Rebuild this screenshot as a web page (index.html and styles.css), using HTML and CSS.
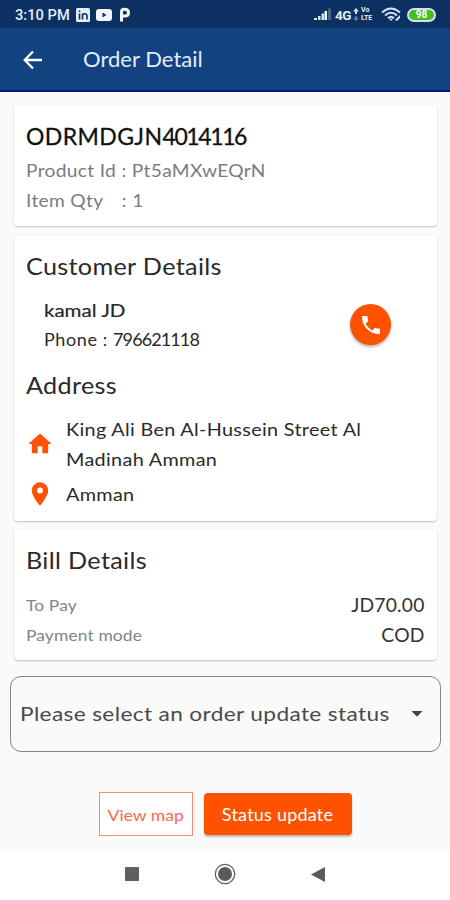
FILE: index.html
```
<!DOCTYPE html>
<html lang="en">
<head>
<meta charset="utf-8">
<title>Order Detail</title>
<link rel="stylesheet" href="styles.css">
</head>
<body>
<div class="status">
  <span class="time">3:10 PM</span>
  <svg class="apps" width="56" height="16" viewBox="0 0 56 16">
    <rect x="0" y="1" width="14" height="14" rx="1.5" fill="#e6edf8"/>
    <path d="M3.500 6.500v6M3.500 3.400v1.500M6.500 12.500V6.500M6.500 9q0-2.200 2.200-2.200T11 9v3.500" fill="none" stroke="#0c2e61" stroke-width="1.600"/>
    <rect x="20" y="2" width="16" height="12" rx="3" fill="#f2f5fb"/><path d="M26.500 5.500v5l4-2.500z" fill="#0c2e61"/>
    <path d="M45.500 14.500V5q0-2.700 3-2.700 4 0 4 3.400t-4 3.400h-1.500" fill="none" stroke="#f2f5fb" stroke-width="3"/>
  </svg>
  <span class="spacer"></span>
  <svg width="18" height="13" viewBox="0 0 18 13"><path d="M0 12h3v-2H0zM4 12h2.500V8H4zM7.500 12H10V5.500H7.500z" fill="#d5dfed"/><path d="M10.500 12H13V3h-2.500z" fill="#fff"/><path d="M14 12h3V.5h-3z" fill="#47648c"/></svg>
  <span class="net">4G</span>
  <svg class="arrows" width="6" height="14" viewBox="0 0 6 14"><path d="M0 3.500 3 0l3 3.500H4V6H2V3.500z" fill="#d5dfed"/><path d="M0 10l3 3 3-3H4V8H2v2z" fill="#617ba0"/></svg>
  <span class="volte"><span>Vo</span><span>LTE</span></span>
  <svg class="wifi" width="20" height="15" viewBox="0 0 20 15"><g fill="none" stroke="#d5dfed" stroke-width="2"><path d="M1 5.500q9-8 18 0M4 8.500q6-5.500 12 0M7 11.300q3-2.800 6 0"/></g><path d="m10 14-2-2.200h4zM14 13l5-5v3l-3 3z" fill="#d5dfed"/></svg>
  <span class="battery">98</span>
</div>
<header class="bar">
  <svg width="20" height="20" viewBox="0 0 20 20"><path d="M19 10H2M10 1.500 1.700 10l8.300 8.500" fill="none" stroke="#fff" stroke-width="2.300"/></svg>
  <h1>Order Detail</h1>
</header>
<main>
  <section class="card order">
    <h2 class="code">ODRMDGJN<span class="digits">4014116</span></h2>
    <p class="pid">Product Id : Pt5aMXwEQrN</p>
    <p class="qty"><span class="qlabel">Item Qty</span><span>: 1</span></p>
  </section>
  <section class="card customer">
    <h2 class="heading">Customer Details</h2>
    <div class="person">
      <div>
        <p class="name">kamal JD</p>
        <p class="phone">Phone : <span class="digits">796621118</span></p>
      </div>
      <span class="call"><svg width="24" height="24" viewBox="0 0 24 24"><path fill="#fff" d="M6.620 10.790c1.440 2.830 3.760 5.140 6.590 6.590l2.200-2.200c.27-.27.67-.36 1.020-.24 1.120.37 2.330.57 3.570.57.55 0 1 .45 1 1V20c0 .55-.45 1-1 1-9.390 0-17-7.610-17-17 0-.55.45-1 1-1h3.500c.55 0 1 .45 1 1 0 1.250.2 2.450.57 3.570.11.35.03.74-.25 1.020z"/></svg></span>
    </div>
    <h2 class="heading">Address</h2>
    <div class="place">
      <svg width="28" height="28" viewBox="0 0 24 24"><path d="M10 20v-6h4v6h5v-8h3L12 3 2 12h3v8z"/></svg>
      <p>King Ali Ben Al-Hussein Street Al<br>Madinah Amman</p>
    </div>
    <div class="place city">
      <svg width="28" height="28" viewBox="0 0 24 24"><path d="M12 2C8.130 2 5 5.130 5 9c0 5.250 7 13 7 13s7-7.750 7-13c0-3.870-3.130-7-7-7zm0 9.500a2.500 2.500 0 0 1 0-5 2.500 2.500 0 0 1 0 5z"/></svg>
      <p>Amman</p>
    </div>
  </section>
  <section class="card bill">
    <h2 class="heading">Bill Details</h2>
    <div class="row"><span class="label">To Pay</span><span class="value">JD70.00</span></div>
    <div class="row"><span class="label">Payment mode</span><span class="value">COD</span></div>
  </section>
  <div class="select"><span>Please select an order update status</span><svg width="12" height="6" viewBox="0 0 12 6"><path d="M.5 0h11L6 5.800z" fill="#444"/></svg></div>
  <div class="actions">
    <button class="map"><span>View map</span></button>
    <button class="update"><span>Status update</span></button>
  </div>
</main>
<nav>
  <svg width="14" height="14"><rect width="14" height="14" fill="#606060"/></svg>
  <svg width="22" height="22" viewBox="0 0 22 22"><circle cx="11" cy="11" r="9.700" fill="none" stroke="#606060" stroke-width="1.300"/><circle cx="11" cy="11" r="7" fill="#5b5b5b"/></svg>
  <svg width="14" height="15" viewBox="0 0 14 15"><path d="M14 0v15L0 7.500z" fill="#5b5b5b"/></svg>
</nav>
</body>
</html>
```
FILE: styles.css
```
* { box-sizing: border-box; margin: 0; padding: 0; }
body { width: 450px; height: 900px; display: flex; flex-direction: column; background: #fafafa; font-family: Lato, sans-serif; color: #2a2a2a; overflow: hidden; }
svg { display: block; flex: none; }
p, h1, h2, span { white-space: nowrap; font-weight: 400; }
.status { height: 28px; background: #0b3162; color: #e6edf8; display: flex; align-items: center; padding: 1px 14px 0 15px; font-family: Roboto, sans-serif; }
.time { font-size: 14.700px; font-weight: 500; }
.apps { margin-left: 6px; }
.spacer { flex: 1; }
.net { font-size: 13.500px; font-weight: 700; margin-left: 3px; letter-spacing: -.5px; }
.arrows { margin-left: 2px; }
.volte { display: flex; flex-direction: column; font-size: 7px; line-height: 8px; margin: 0 0 1px 2px; width: 14px; }
.volte span { font-weight: 700; }
.wifi { margin: 0 6px 0 6px; }
.battery { width: 29px; height: 14px; border-radius: 7px; background: #43bf23; border: 2px solid #d5dfed; color: #fff; font-size: 10px; font-weight: 700; line-height: 10px; text-align: center; }
.bar { height: 64px; background: #124280; border-bottom: 2px solid #06157a; display: flex; align-items: center; padding-left: 23px; }
.bar svg { margin-top: 2px; }
.bar h1 { margin-left: 40px; color: #e4ecfa; font-size: 21px; line-height: 30px; transform: scaleX(1.05); transform-origin: left; }
main { padding: 14px 9px 0 10px; height: 758px; display: flex; flex-direction: column; }
.card { background: #fff; border-radius: 4px; margin: 0 4px; padding: 0 12px; box-shadow: 0 1px 2px rgba(0,0,0,.23); flex: none; }
.order { height: 120px; padding-top: 15px; color: #7c7c7c; }
.code { font-size: 23px; line-height: 30px; color: #111; letter-spacing: .4px; -webkit-text-stroke: .3px #111; }
.code .digits { letter-spacing: -1.400px; }
.pid, .qty { font-size: 18px; line-height: 30px; letter-spacing: .3px; transform: scaleX(1.065); transform-origin: left; }
.pid { margin-top: 4px; }
.qty { display: flex; }
.qlabel { width: 90px; }
.customer { height: 285px; margin-top: 10px; padding-top: 15px; }
.heading { font-size: 23px; line-height: 30px; letter-spacing: .3px; transform: scaleX(1.095); transform-origin: left; }
.person { display: flex; justify-content: space-between; padding: 14px 34px 0 18px; height: 89px; }
.name { font-size: 18px; line-height: 30px; -webkit-text-stroke: .2px #222; transform: scaleX(1.14); transform-origin: left; }
.phone { font-size: 18px; line-height: 29px; letter-spacing: .6px; }
.phone .digits { letter-spacing: -.9px; }
.call { width: 41px; height: 41px; border-radius: 50%; background: #ff5200; display: flex; align-items: center; justify-content: center; margin-top: 9px; box-shadow: 0 2px 3px rgba(0,0,0,.3); }
.place { display: flex; align-items: center; font-size: 18px; line-height: 30px; letter-spacing: .3px; margin-top: 14px; }
.place p { transform: scaleX(1.1); transform-origin: left; }
.place svg { fill: #ff5200; margin-right: 12px; }
.city { margin-top: 5px; }
.bill { height: 130px; margin-top: 9px; padding-top: 15px; }
.row { display: flex; justify-content: space-between; line-height: 30px; }
.heading + .row { margin-top: 15px; }
.label { font-size: 16px; color: #858585; letter-spacing: .1px; transform: scaleX(1.09); transform-origin: left; }
.value { font-size: 18.500px; color: #333; letter-spacing: .2px; transform: scaleX(1.04); transform-origin: right; }
.select { height: 76px; margin-top: 16px; border: 1.500px solid #858585; border-radius: 11px; display: flex; align-items: center; justify-content: space-between; padding: 0 17px 0 9px; font-size: 20px; letter-spacing: .3px; color: #4a4a4a; flex: none; }
.select span { transform: scaleX(1.135); transform-origin: left; padding-bottom: 3px; }
.actions { display: flex; margin: 40px 0 0 89px; gap: 11px; align-items: center; }
button { font-family: inherit; white-space: nowrap; border: 0; }
button span { display: inline-block; }
.map { width: 94px; height: 44px; border: 1px solid #ff8a70; background: #fff; color: #f96b4d; font-size: 16px; }
.map span { transform: scaleX(1.1); }
.update { width: 148px; height: 42px; border-radius: 4px; background: #ff5200; color: #fff; font-size: 17px; letter-spacing: .2px; box-shadow: 0 2px 2px rgba(0,0,0,.25); }
.update span { transform: scaleX(1.06); }
nav { height: 50px; background: #fff; display: flex; align-items: center; padding: 0 125px 2px; justify-content: space-between; }
```
